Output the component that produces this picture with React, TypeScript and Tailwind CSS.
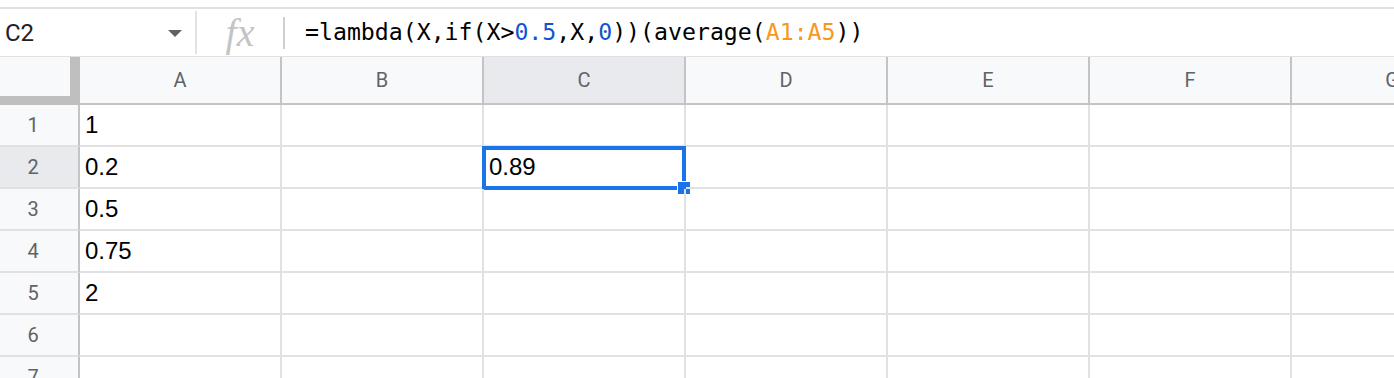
import React from 'react'

const COLUMNS = ['A', 'B', 'C', 'D', 'E', 'F', 'G']
const ROWS = [1, 2, 3, 4, 5, 6, 7]

const VALUES: { [key: string]: string } = {
    A1: '1',
    A2: '0.2',
    A3: '0.5',
    A4: '0.75',
    A5: '2',
    C2: '0.89',
}

const SELECTED_COL = 'C'
const SELECTED_ROW = 2

function FormulaBar() {
    return (
        <div className="mt-[7px] flex h-[50px] items-center border-t-2 border-b border-[#e1e1e1] bg-white">
            <div className="flex w-[195px] shrink-0 items-center justify-between pl-[5px] pr-[13px]">
                <span className="font-['Roboto',sans-serif] text-[24px] text-[#202124]">C2</span>
                <svg width="14" height="7" viewBox="0 0 14 7" className="mt-[2px]">
                    <polygon points="0,0 14,0 7,7" fill="#5f6368" />
                </svg>
            </div>
            <div className="h-[43px] w-[2px] shrink-0 bg-[#e3e3e3]" />
            <div className="flex w-[86px] shrink-0 items-center justify-center">
                <span className="font-['Liberation_Serif',serif] text-[40px] italic leading-none text-[#c4c4c4]">
                    fx
                </span>
            </div>
            <div className="h-[32px] w-[2px] shrink-0 bg-[#cfcfcf]" />
            <div className="whitespace-pre pl-[20px] font-['DejaVu_Sans_Mono',monospace] text-[23.2px] text-[#000]">
                =lambda(X,if(X&gt;<span className="text-[#1155cc]">0.5</span>,X,<span className="text-[#1155cc]">0</span>))(average(<span className="text-[#f7981d]">A1:A5</span>))
            </div>
        </div>
    )
}

function HeaderRow() {
    return (
        <div className="flex h-[48px]">
            <div className="h-full w-[80px] shrink-0 border-r-[10px] border-b-[9px] border-[#bfbfbf] bg-[#f8f9fa]" />
            {COLUMNS.map((col) => (
                <div
                    key={col}
                    className={`flex h-full w-[202px] shrink-0 items-center justify-center border-r-2 border-b-2 border-[#c4c4c4] font-['Roboto',sans-serif] text-[20px] text-[#5f6368] ${
                        col === SELECTED_COL ? 'bg-[#e8eaed]' : 'bg-[#f8f9fa]'
                    }`}
                >
                    {col}
                </div>
            ))}
        </div>
    )
}

function Row({ row }: { row: number }) {
    return (
        <div className="flex h-[42px]">
            <div
                className={`flex h-full w-[80px] shrink-0 items-center justify-center border-r-2 border-b-2 border-r-[#c4c4c4] border-b-[#e1e1e1] pr-[12px] font-['Roboto',sans-serif] text-[20px] text-[#5f6368] ${
                    row === SELECTED_ROW ? 'bg-[#e8eaed]' : 'bg-[#f8f9fa]'
                }`}
            >
                {row}
            </div>
            {COLUMNS.map((col) => {
                const key = `${col}${row}`
                const selected = col === SELECTED_COL && row === SELECTED_ROW
                return (
                    <div
                        key={key}
                        className="relative flex h-full w-[202px] shrink-0 items-center border-r-2 border-b-2 border-[#e1e1e1] pl-[5px] font-['Liberation_Sans',Arial,sans-serif] text-[24px] text-[#000]"
                    >
                        {VALUES[key]}
                        {selected && (
                            <div className="absolute -top-[1px] -bottom-[3px] -left-[2px] -right-[2px] border-4 border-[#1a73e8]">
                                <div className="absolute -right-[9px] -bottom-[9px] h-[14px] w-[14px] border border-white bg-[#1a73e8]" />
                            </div>
                        )}
                    </div>
                )
            })}
        </div>
    )
}

export default function App() {
    return (
        <div className="h-[378px] w-[1394px] overflow-hidden bg-white">
            <FormulaBar />
            <HeaderRow />
            {ROWS.map((row) => (
                <Row key={row} row={row} />
            ))}
        </div>
    )
}
